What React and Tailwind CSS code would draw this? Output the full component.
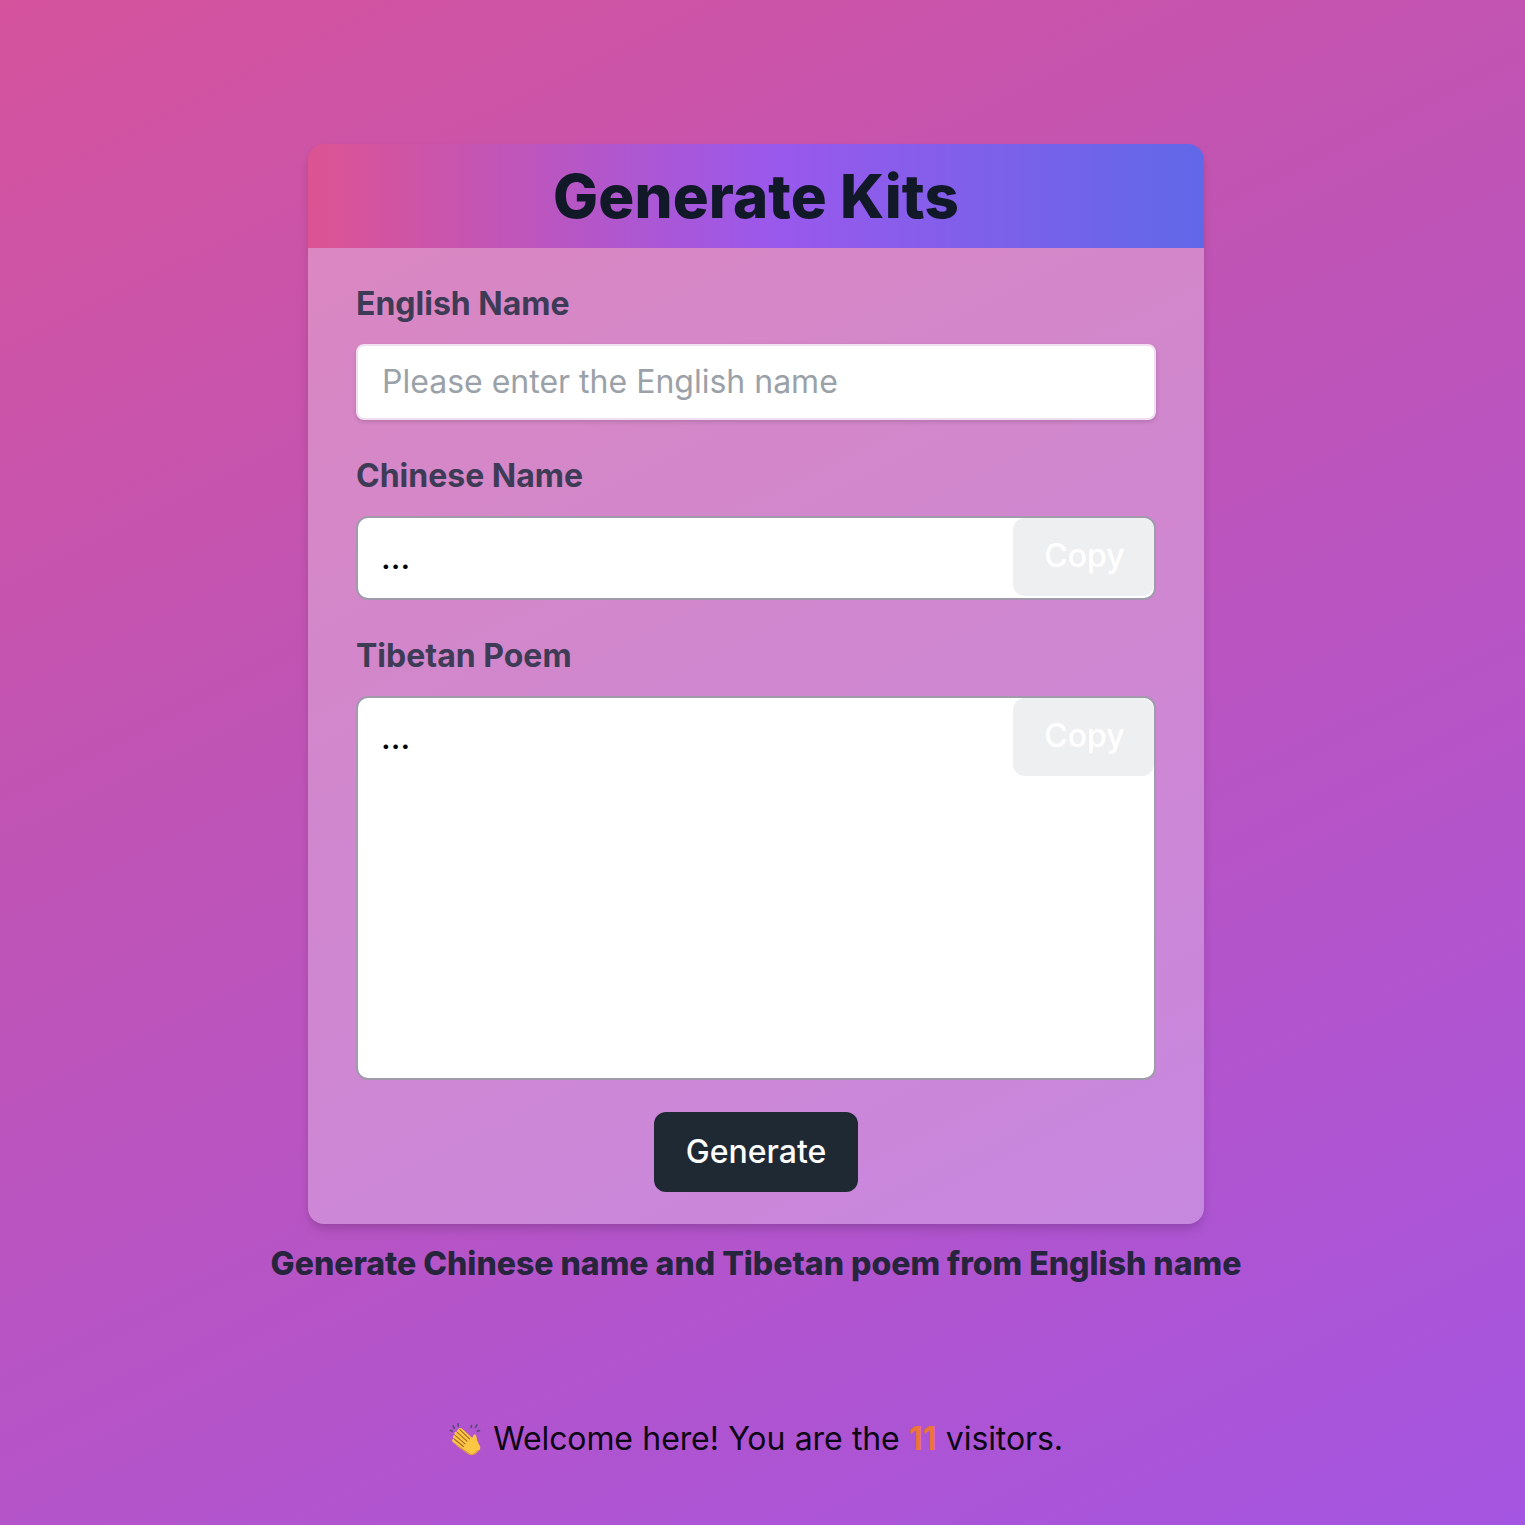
import React, { useState } from 'react';

const ClapIcon = () => (
    <svg viewBox="0 0 32 34" className="w-8 h-[34px] shrink-0" fill="none">
        <g stroke="#5b4a7c" strokeWidth="1.7" strokeLinecap="round">
            <path d="M1.500 8.500l1.800.8M4 4l1.300 2.200M9 1.800l.2 2.200M22.500 3.500l-.3 2M28 3l-1.500 2.400M30.500 8.500l-2.100.6" />
        </g>
        <path
            d="M9.500 7c1-1.400 2.700-1.200 3.900-.1l9.100 8.300c.8.700 1.400.5 1.500-.4.100-1.300.6-2.500 1.800-2.300 1.100.2 1.500 1.300 1.700 2.500l.9 4.300 2.500 4.700c.8 1.900.3 3.400-1 4.600l-2.900 2.700c-2 1.700-4.600 1.600-6.600.1L4.300 20.600c-2.200-1.900-1-4.200 1-3.500-2.300-2-1.100-4.300.9-3.700-1.700-2.200-.3-4.300 1.700-3.400-.1-1.100.6-2.300 1.600-3z"
            fill="#fbc743"
        />
        <path
            d="M8.300 10.300l9.700 8.800M6.500 13.600l9.500 8.200M5.500 17.200l9 7.300M10.800 7.600l9.700 9.200"
            stroke="#a9652f"
            strokeWidth="1.1"
            strokeLinecap="round"
        />
        <path
            d="M8 23.500l11.700 8.300c1.900 1.200 4.200 1.100 6-.4l3.300-3"
            stroke="#e19a3f"
            strokeWidth="1.300"
            strokeLinecap="round"
        />
    </svg>
);

const Label = ({ children, htmlFor }) => (
    <label htmlFor={htmlFor} className="block text-[32px] leading-[48px] font-bold text-[#3d3b55]">
        {children}
    </label>
);

const ResultBox = ({ value, className }) => (
    <div className={`relative mt-4 overflow-hidden rounded-xl border-2 border-[#a09aac] bg-white pl-[23px] pr-6 py-4 text-black ${className}`}>
        <p className="text-[32px] leading-[48px] font-medium">{value}</p>
        <button
            type="button"
            disabled
            onClick={() => navigator.clipboard.writeText(value)}
            className="absolute top-0 right-0 h-[78px] w-[141px] rounded-xl bg-[#eeeff1] pb-0.5 pl-0.5 text-[32px] font-[450] text-white"
        >
            Copy
        </button>
    </div>
);

const App = () => {
    const [name, setName] = useState('');

    return (
        <div className="h-[1525px] overflow-hidden bg-[linear-gradient(154deg,#d5539d_0%,#c154b3_35%,#b654c7_64%,#a455e1_100%)] pt-36 pr-[13px] font-['Inter',sans-serif]">
            <main className="flex flex-col items-center">
                <div className="w-[896px] overflow-hidden rounded-2xl shadow-[0_8px_12px_-2px_rgba(0,0,0,0.1),0_4px_8px_-2px_rgba(0,0,0,0.1)]">
                    <div className="flex h-[104px] items-center justify-center bg-[linear-gradient(90deg,#dd5392_0%,#9a58ec_52%,#6068e8_100%)]">
                        <h1 className="text-[60px] leading-[72px] font-extrabold tracking-[0.1px] text-[#111827]">Generate Kits</h1>
                    </div>

                    <div className="flex h-[976px] flex-col bg-white/30 px-12 pt-8">
                        <Label htmlFor="name">English Name</Label>
                        <input
                            id="name"
                            type="text"
                            value={name}
                            onChange={(e) => setName(e.target.value)}
                            placeholder="Please enter the English name"
                            className="mt-4 h-[76px] rounded-lg border-2 border-[#f1def1] bg-white px-6 pb-0.5 text-[32px] shadow-[0_2px_4px_rgba(0,0,0,0.15)] outline-none placeholder:text-[#9ba1a8]"
                        />

                        <div className="mt-8">
                            <Label>Chinese Name</Label>
                            <ResultBox value="..." className="h-[84px]" />
                        </div>

                        <div className="mt-8">
                            <Label>Tibetan Poem</Label>
                            <ResultBox value="..." className="h-[384px]" />
                        </div>

                        <button
                            type="button"
                            className="mt-8 h-20 w-[204px] self-center rounded-xl bg-[#1f2933] text-[32px] font-[450] text-white"
                        >
                            Generate
                        </button>
                    </div>
                </div>

                <h2 className="mt-4 text-[32px] leading-[48px] font-extrabold text-[#27243d]">
                    Generate Chinese name and Tibetan poem from English name
                </h2>
            </main>

            <footer className="mt-[127px] flex items-center justify-center text-[32px] leading-[48px] text-[#0d0614]">
                <ClapIcon />
                <p className="ml-3 tracking-[-0.1px] [word-spacing:0.5px]">
                    Welcome here! You are the <span className="font-bold text-[#ed7539]">11</span> visitors.
                </p>
            </footer>
        </div>
    );
};

export default App;
